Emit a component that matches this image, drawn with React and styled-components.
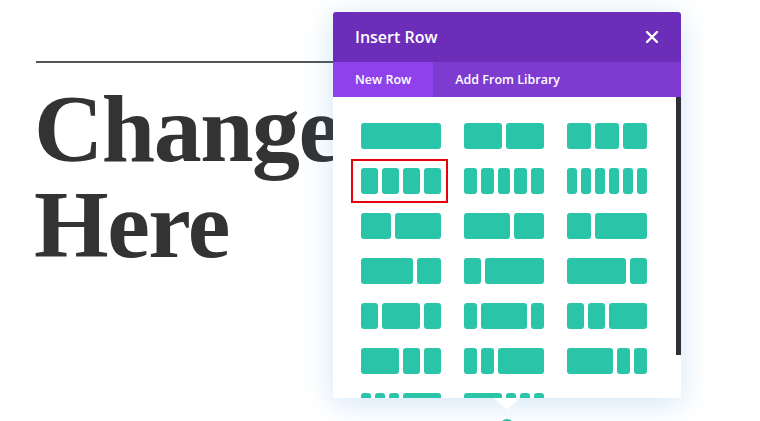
import React from "react";
import styled, { createGlobalStyle } from "styled-components";

const GlobalStyle = createGlobalStyle`
  html, body { margin: 0; padding: 0; background: #ffffff; }
  body { font-family: "Open Sans", "Liberation Sans", sans-serif; overflow: hidden; }
`;

const Page = styled.div`
  position: relative;
  width: 760px;
  height: 421px;
  overflow: hidden;
  background: #ffffff;
`;

const Content = styled.div`
  padding: 61px 0 0 36px;
  display: flex;
  flex-direction: column;
`;

const Rule = styled.div`
  width: 420px;
  height: 2px;
  background: #555555;
`;

const Heading = styled.h1`
  margin: 18px 0 0 -2px;
  display: flex;
  flex-direction: column;
  font-family: "Liberation Serif", "DejaVu Serif", serif;
  font-weight: 700;
  font-size: 96px;
  letter-spacing: -1.5px;
  color: #333333;
  white-space: nowrap;
`;

const HeadLine = styled.span`
  display: block;
  height: 96px;
  line-height: 96px;
  overflow: visible;
`;

const Modal = styled.div`
  position: absolute;
  left: 333px;
  top: 12px;
  width: 348px;
  height: 386px;
  display: flex;
  flex-direction: column;
  background: #ffffff;
  border-radius: 3px 3px 0 0;
  box-shadow: 0 5px 30px rgba(43, 135, 218, 0.22);
`;

const Header = styled.div`
  height: 50px;
  flex: none;
  display: flex;
  align-items: center;
  justify-content: space-between;
  padding: 0 23px 0 22px;
  background: #6c2eb9;
  border-radius: 3px 3px 0 0;
`;

const Title = styled.span`
  color: #ffffff;
  font-size: 16px;
  font-weight: 600;
`;

const Close = styled.button`
  border: 0;
  padding: 0;
  background: none;
  width: 12px;
  height: 12px;
  display: flex;
  cursor: pointer;
`;

const Tabs = styled.div`
  height: 35px;
  flex: none;
  display: flex;
  background: #7e3bd0;
`;

const Tab = styled.div`
  display: flex;
  align-items: center;
  padding: 0 22px;
  color: #ffffff;
  font-size: 12.5px;
  font-weight: 600;
  background: ${(p) => (p.$active ? "#8f42ec" : "transparent")};
`;

const Body = styled.div`
  flex: 1;
  display: flex;
  justify-content: space-between;
  overflow: hidden;
`;

const Grid = styled.div`
  padding: 26px 0 0 28px;
  display: grid;
  grid-template-columns: repeat(3, 80px);
  column-gap: 23px;
  row-gap: 19px;
  align-content: start;
`;

const Layout = styled.div`
  position: relative;
  display: flex;
  gap: 4px;
  width: 80px;
  height: 26px;
`;

const Col = styled.div`
  flex: ${(p) => p.$grow} 1 0;
  background: #2ac4a8;
  border-radius: 3px;
`;

const Highlight = styled.div`
  position: absolute;
  top: -9px;
  bottom: -9px;
  left: -10px;
  right: -7px;
  border: 2px solid #e8000b;
`;

const Scrollbar = styled.div`
  width: 5px;
  height: 258px;
  flex: none;
  background: #2d3035;
`;

const Pointer = styled.div`
  position: absolute;
  top: 100%;
  left: 50%;
  transform: translateX(-50%);
  width: 0;
  height: 0;
  border-left: 13px solid transparent;
  border-right: 13px solid transparent;
  border-top: 12px solid #ffffff;
`;

const AddButton = styled.div`
  position: absolute;
  left: 500px;
  top: 419px;
  width: 14px;
  height: 14px;
  border-radius: 50%;
  background: #2ac4a8;
`;

const L = [
  [1],
  [1 / 2, 1 / 2],
  [1 / 3, 1 / 3, 1 / 3],
  [1 / 4, 1 / 4, 1 / 4, 1 / 4],
  [1 / 5, 1 / 5, 1 / 5, 1 / 5, 1 / 5],
  [1 / 6, 1 / 6, 1 / 6, 1 / 6, 1 / 6, 1 / 6],
  [2 / 5, 3 / 5],
  [3 / 5, 2 / 5],
  [1 / 3, 2 / 3],
  [2 / 3, 1 / 3],
  [1 / 4, 3 / 4],
  [3 / 4, 1 / 4],
  [1 / 4, 1 / 2, 1 / 4],
  [1 / 5, 3 / 5, 1 / 5],
  [1 / 4, 1 / 4, 1 / 2],
  [1 / 2, 1 / 4, 1 / 4],
  [1 / 5, 1 / 5, 3 / 5],
  [3 / 5, 1 / 5, 1 / 5],
  [1 / 6, 1 / 6, 1 / 6, 1 / 2],
  [1 / 2, 1 / 6, 1 / 6, 1 / 6],
];

export default function App() {
  return (
    <Page>
      <GlobalStyle />
      <Content>
        <Rule />
        <Heading>
          <HeadLine>Change</HeadLine>
          <HeadLine>Here</HeadLine>
        </Heading>
      </Content>
      <Modal>
        <Header>
          <Title>Insert Row</Title>
          <Close aria-label="Close">
            <svg width="12" height="12" viewBox="0 0 12 12">
              <path d="M1 1L11 11M11 1L1 11" stroke="#ffffff" strokeWidth="2.4" strokeLinecap="round" />
            </svg>
          </Close>
        </Header>
        <Tabs>
          <Tab $active>New Row</Tab>
          <Tab>Add From Library</Tab>
        </Tabs>
        <Body>
          <Grid>
            {L.map((cols, i) => (
              <Layout key={i}>
                {cols.map((f, j) => (
                  <Col key={j} $grow={f * 84 - 4} />
                ))}
                {i === 3 && <Highlight />}
              </Layout>
            ))}
          </Grid>
          <Scrollbar />
        </Body>
        <Pointer />
      </Modal>
      <AddButton />
    </Page>
  );
}
